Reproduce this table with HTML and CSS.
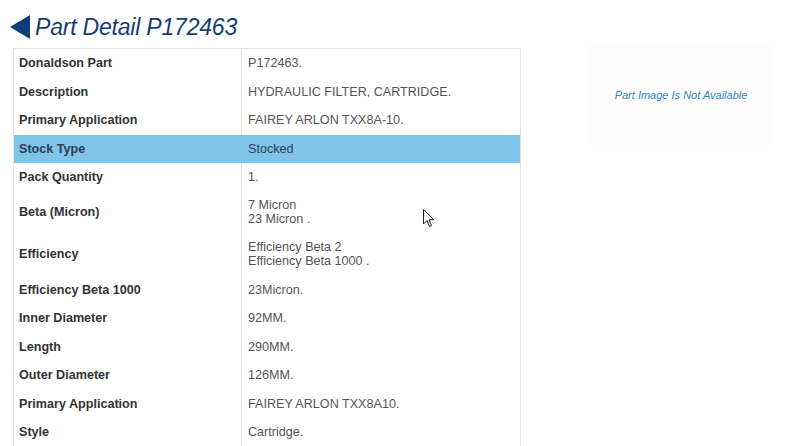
FILE: index.html
```html
<!DOCTYPE html>
<html lang="en">
<head>
  <meta charset="UTF-8">
  <meta name="viewport" content="width=device-width, initial-scale=1.0">
  <title>Part Detail P172463</title>
  <link rel="stylesheet" href="styles.css">
</head>
<body>
<div class="page-title">
  <svg class="back" width="20" height="24" viewBox="0 0 20 24"><polygon points="20,0 20,24 0,12" fill="#0f3d78"/></svg>
  <h1>Part Detail P172463</h1>
</div>

<div class="main">
  <table class="detail">
    <tr><td class="lbl">Donaldson Part</td><td>P172463.</td></tr>
    <tr><td class="lbl">Description</td><td>HYDRAULIC FILTER, CARTRIDGE.</td></tr>
    <tr><td class="lbl">Primary Application</td><td>FAIREY ARLON TXX8A-10.</td></tr>
    <tr class="stock"><td class="lbl">Stock Type</td><td>Stocked</td></tr>
    <tr><td class="lbl">Pack Quantity</td><td>1.</td></tr>
    <tr><td class="lbl">Beta (Micron)</td><td class="multi">7 Micron<br>23 Micron .</td></tr>
    <tr><td class="lbl">Efficiency</td><td class="multi">Efficiency Beta 2<br>Efficiency Beta 1000 .</td></tr>
    <tr><td class="lbl">Efficiency Beta 1000</td><td>23Micron.</td></tr>
    <tr><td class="lbl">Inner Diameter</td><td>92MM.</td></tr>
    <tr><td class="lbl">Length</td><td>290MM.</td></tr>
    <tr><td class="lbl">Outer Diameter</td><td>126MM.</td></tr>
    <tr><td class="lbl">Primary Application</td><td>FAIREY ARLON TXX8A10.</td></tr>
    <tr><td class="lbl">Style</td><td>Cartridge.</td></tr>
  </table>

  <div class="part-image">Part Image Is Not Available</div>
</div>

<svg class="cursor" width="12" height="20" viewBox="0 0 12 20"><path d="M0.5,0.5 L0.5,15 L4,11.5 L6.5,17.5 L8.5,16.7 L6,10.8 L10.8,10.8 Z" fill="#fff" stroke="#222" stroke-width="1"/></svg>
</body>
</html>
```

FILE: styles.css
```css
body {
  margin: 0;
  font-family: "Liberation Sans", Arial, sans-serif;
  background-color: #ffffff;
  color: #333;
  overflow: hidden;
}
.page-title {
  display: flex;
  align-items: center;
  height: 46px;
  padding-left: 10px;
  padding-top: 8px;
  box-sizing: border-box;
}
.page-title h1 {
  margin: 0 0 0 5px;
  font-size: 23px;
  font-weight: normal;
  font-style: italic;
  color: #153e75;
  letter-spacing: -0.2px;
}
.main {
  display: flex;
  align-items: flex-start;
  padding-left: 13px;
}
.detail {
  width: 508px;
  margin-top: 2px;
  border-collapse: collapse;
  border: 1px solid #e4e4e4;
  font-size: 12.6px;
}
.detail td {
  padding: 5px 7px 5px 6px;
  line-height: 18.5px;
  color: #555;
  vertical-align: middle;
}
.detail td.lbl {
  width: 215px;
  padding-left: 5px;
  font-weight: bold;
  color: #333;
  border-right: 1px solid #e4e4e4;
}
.detail td.multi {
  padding-top: 6px;
  padding-bottom: 8px;
  line-height: 14px;
}
.detail tr.stock td {
  background-color: #80c4ea;
  color: #2d3e4e;
  border-right-color: #80c4ea;
}
.part-image {
  width: 182px;
  height: 98px;
  margin-left: 69px;
  display: flex;
  align-items: center;
  justify-content: center;
  background-color: #fdfdfd;
  box-shadow: 0 0 2px #f7f7f7;
  font-size: 11px;
  font-style: italic;
  color: #2f86c0;
}
.cursor {
  position: absolute;
  left: 423px;
  top: 209px;
}
```
